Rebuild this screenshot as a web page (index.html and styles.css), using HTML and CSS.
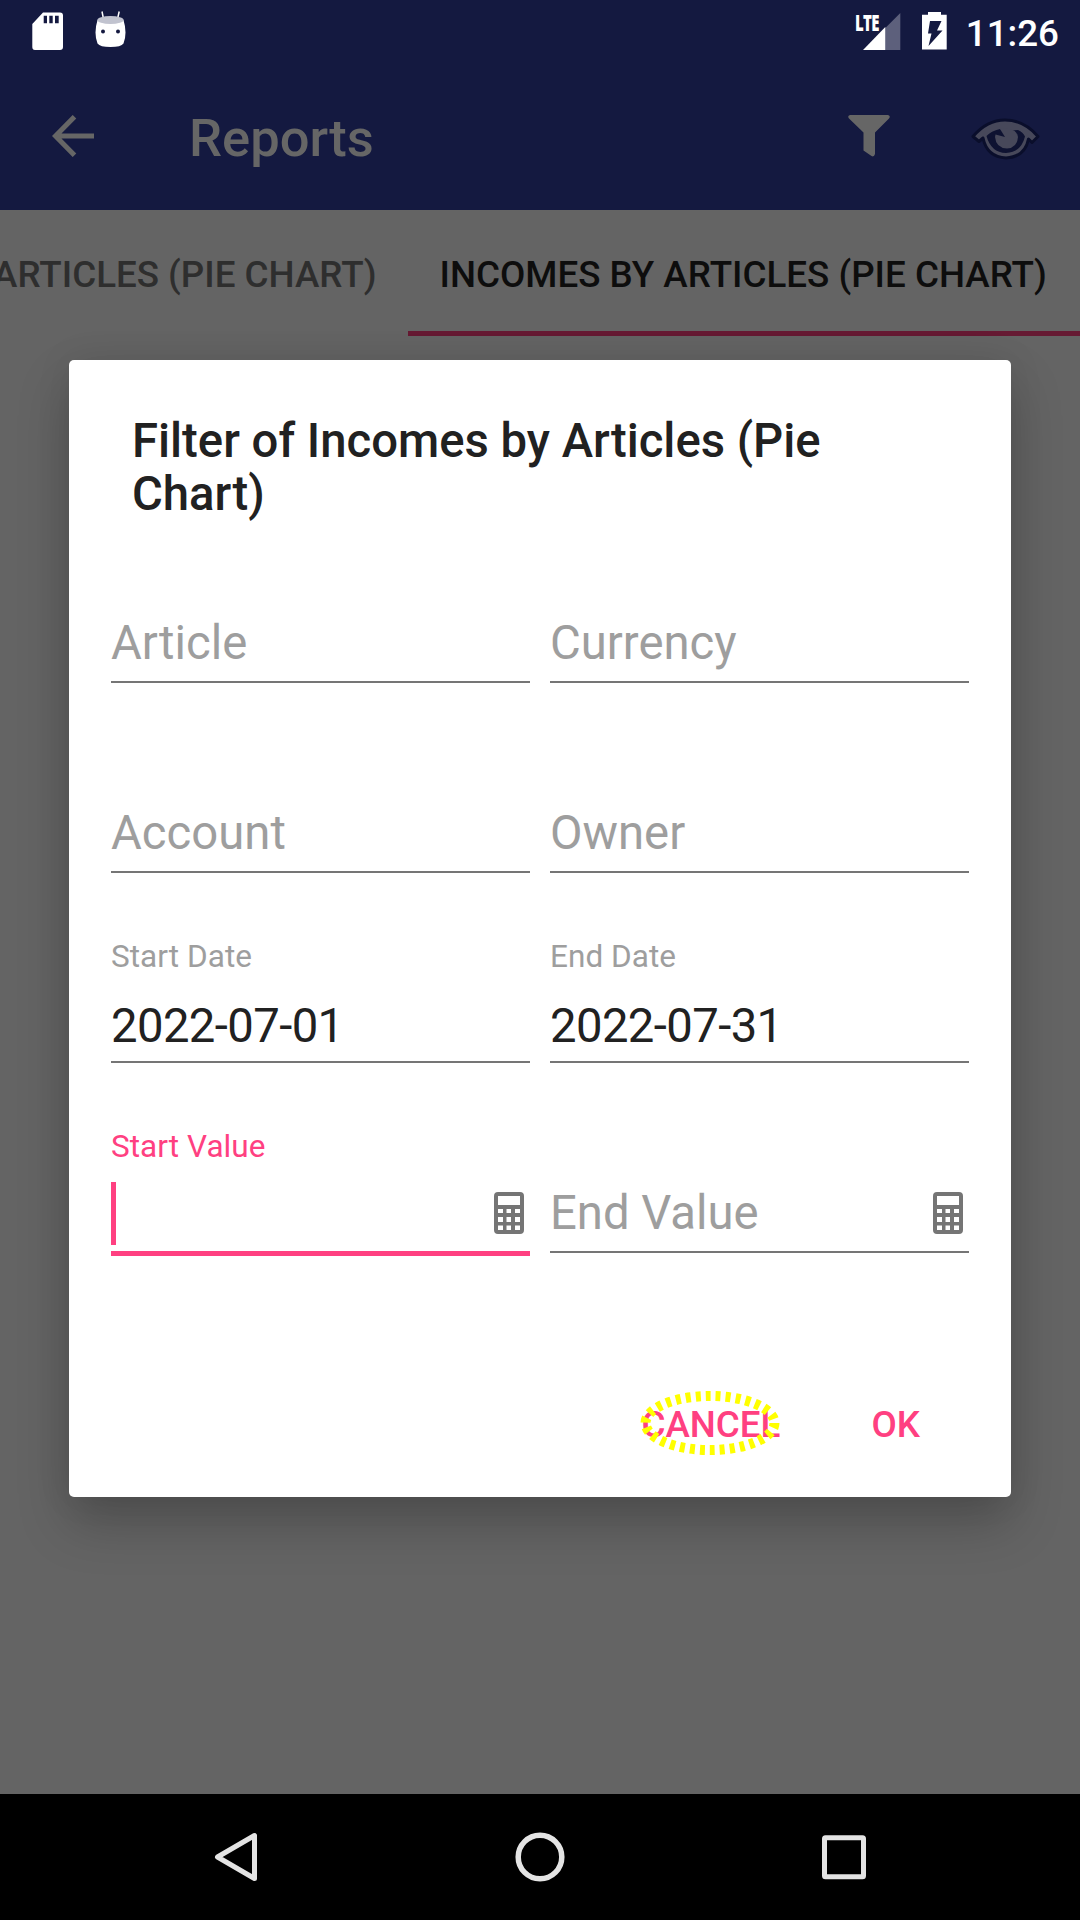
FILE: index.html
```html
<!DOCTYPE html>
<html lang="en">
<head>
<meta charset="utf-8">
<title>Reports</title>
<link rel="stylesheet" href="styles.css">
</head>
<body>
<div class="screen">
  <header class="statusbar">
    <div class="notifications">
      <svg class="ic-sd" width="31" height="39" viewBox="0 0 31 39"><path fill="#fff" fill-rule="evenodd" d="M11 0.5H28Q31 .5 31 3.5V35Q31 38 28 38H3Q.3 38 .3 35V12ZM11.7 3.7V11.3H15V3.7ZM17.3 3.7V11.3H20.7V3.7ZM23 3.7V11.3H26.7V3.7Z"/></svg>
      <svg class="ic-droid" width="32" height="37" viewBox="0 0 32 37"><path fill="none" stroke="#fff" stroke-width="1.500" d="M7 .5L8.500 8M24.200.5L22.500 8"/><path fill="#fff" d="M2.500 9Q16 15 28.500 9Q32.500 22 28.500 32.500Q26 36 15.500 36Q5 36 2.500 32.500Q-1.500 22 2.500 9Z"/><ellipse cx="15.500" cy="9" rx="13.200" ry="4" fill="#c1c3cf"/><circle cx="8" cy="20.500" r="2" fill="#141940"/><circle cx="23" cy="20.500" r="2" fill="#141940"/></svg>
    </div>
    <div class="system">
      <div class="signal"><svg width="47" height="38" viewBox="0 0 47 38"><path fill="#5d607c" d="M46.300 0V37H31.300V15Z"/><path fill="#fff" d="M31.300 14V37H9Z"/></svg><span class="lte">LTE</span></div>
      <svg class="ic-battery" width="25" height="38" viewBox="0 0 25 38"><path fill="#fff" fill-rule="evenodd" d="M6 0H19V2.700H24.700V37.500H0V2.700H6ZM8 9L6 21.500H9.500L6.500 34L20.500 18.500H15L19.500 9Z"/></svg>
      <span class="clock">11:26</span>
    </div>
  </header>
  <div class="appbar">
    <svg class="ic-back" width="42" height="42" viewBox="0 0 42 42"><path fill="none" stroke="#666" stroke-width="5" d="M42 21H4M22.500 1.700L3.500 21L22.500 40.300"/></svg>
    <h1 class="apptitle">Reports</h1>
    <svg class="ic-filter" width="42" height="42" viewBox="0 0 42 42"><path fill="#666" d="M2 0H40Q43 1 41 3.500L27 17.500V39Q26 42.500 23.500 41L15.500 35.500V17.500L1 3.500Q-1 1 2 0Z"/></svg>
    <svg class="ic-eye" width="70" height="46" viewBox="0 0 70 46"><g stroke="#0a0e2b" stroke-width="3" stroke-linejoin="round" fill="#47485a"><path d="M2 19.500Q16 3 34 3Q53 3 67 19.500L61 25.500L57.500 22Q54 40 35 41Q16 40 12 21L8 24.500Z"/></g><path fill="#0e1231" d="M15.500 19Q20 14 29 12L33 14L47 13Q52 15 54 19.500Q50 35.500 35 36Q20 35.500 15.500 19Z"/><path fill="#47485a" d="M24.500 17.500L34 20L29 12Q46 10 47 20Q46 31 36 31.500Q25 31 24 20Z"/></svg>
  </div>
  <nav class="tabs">
    <div class="tab">EXPENSES BY ARTICLES (PIE CHART)</div>
    <div class="tab active">INCOMES BY ARTICLES (PIE CHART)</div>
  </nav>
  <main class="content">
    <section class="dialog">
      <h2 class="dialog-title">Filter of Incomes by Articles (Pie Chart)</h2>
      <div class="form">
        <div class="field"><div class="label"></div><div class="hint">Article</div></div>
        <div class="field"><div class="label"></div><div class="hint">Currency</div></div>
        <div class="field"><div class="label"></div><div class="hint">Account</div></div>
        <div class="field"><div class="label"></div><div class="hint">Owner</div></div>
        <div class="field"><div class="label">Start Date</div><div class="value">2022-07-01</div></div>
        <div class="field"><div class="label">End Date</div><div class="value">2022-07-31</div></div>
        <div class="field focused"><div class="label">Start Value</div><div class="value"><i class="caret"></i><svg class="ic-calc" width="30" height="42" viewBox="0 0 30 42"><path fill="#757575" fill-rule="evenodd" d="M4 0H26Q30 0 30 4V38Q30 42 26 42H4Q0 42 0 38V4Q0 0 4 0ZM4 4V13H26V4ZM4 17V21H9V17ZM12.500 17V21H17V17ZM21 17V21H26V17ZM4 25V30H9V25ZM12.500 25V30H17V25ZM21 25V30H26V25ZM4 33.500V38H9V33.500ZM12.500 33.500V38H17V33.500ZM21 33.500V38H26V33.500Z"/></svg></div></div>
        <div class="field"><div class="label"></div><div class="hint">End Value<svg class="ic-calc" width="30" height="42" viewBox="0 0 30 42"><path fill="#757575" fill-rule="evenodd" d="M4 0H26Q30 0 30 4V38Q30 42 26 42H4Q0 42 0 38V4Q0 0 4 0ZM4 4V13H26V4ZM4 17V21H9V17ZM12.500 17V21H17V17ZM21 17V21H26V17ZM4 25V30H9V25ZM12.500 25V30H17V25ZM21 25V30H26V25ZM4 33.500V38H9V33.500ZM12.500 33.500V38H17V33.500ZM21 33.500V38H26V33.500Z"/></svg></div></div>
      </div>
      <div class="actions">
        <div class="button cancel">CANCEL<svg class="highlight" width="144" height="68" viewBox="0 0 144 68"><ellipse cx="72" cy="34" rx="64.500" ry="27" fill="none" stroke="#ff0" stroke-width="10" stroke-dasharray="5 5"/></svg></div>
        <div class="button">OK</div>
      </div>
    </section>
  </main>
  <footer class="navbar">
    <svg width="50" height="50" viewBox="0 0 50 50"><path fill="none" stroke="#e4e4e4" stroke-width="5" stroke-linejoin="round" d="M43.500 3.500V46.500L6.500 25Z"/></svg>
    <svg width="50" height="50" viewBox="0 0 50 50"><circle cx="25" cy="25" r="21.800" fill="none" stroke="#e4e4e4" stroke-width="5.500"/></svg>
    <svg width="50" height="50" viewBox="0 0 50 50"><rect x="5.500" y="5.700" width="39" height="39" rx="1" fill="none" stroke="#e4e4e4" stroke-width="5"/></svg>
  </footer>
</div>
</body>
</html>
```
FILE: styles.css
```css
* { box-sizing: border-box; }
body { margin: 0; font-family: Roboto, "Noto Sans", sans-serif; }
svg { display: block; flex: none; }
h1, h2 { margin: 0; font-weight: 500; }

.screen { width: 1080px; height: 1920px; display: flex; flex-direction: column; overflow: hidden; background: #646464; }

.statusbar { height: 63px; flex: none; display: flex; justify-content: space-between; align-items: flex-start; background: #141940; color: #fff; padding: 0 21px 0 32px; }
.notifications { display: flex; gap: 32px; }
.ic-sd { margin-top: 12px; }
.ic-droid { margin-top: 11px; }
.system { display: flex; }
.signal { position: relative; margin: 12.500px 21px 0 0; }
.lte { position: absolute; left: 1px; top: -2px; font: 800 22px/22px "Open Sans", sans-serif; letter-spacing: -1px; transform: scaleX(.68); transform-origin: left; }
.ic-battery { margin-top: 12px; margin-right: 19px; }
.clock { font-size: 36.750px; line-height: 43px; font-weight: 500; margin-top: 11.500px; }

.appbar { height: 147px; flex: none; display: flex; align-items: flex-start; background: #141940; padding: 52px 39px 0 52px; }
.apptitle { flex: 1; margin: -8px 0 0 95px; font-size: 52.500px; line-height: 62px; color: #666; }
.ic-back { margin-top: 0; }
.ic-filter { margin: 0 81px 0 0; }
.ic-eye { margin: 2px 0 0; }

.tabs { height: 126px; flex: none; display: flex; justify-content: flex-end; overflow: hidden; }
.tab { flex: none; padding: 42.500px 31.500px 0; font-size: 36.750px; line-height: 43px; font-weight: 500; white-space: nowrap; color: #2e2e2e; }
.tab.active { width: 672px; color: #0d0d0d; border-bottom: 5px solid #661a33; }

.content { flex: 1; padding: 24px 69px 0; }
.dialog { height: 1137px; background: #fff; border-radius: 5px; box-shadow: 0 26px 52px rgba(0,0,0,.22), 0 0 36px rgba(0,0,0,.08); }
.dialog-title { padding: 55px 63px 0; font-size: 47.250px; line-height: 53px; color: #212121; }

.form { display: grid; grid-template-columns: 419px 419px; column-gap: 20px; grid-auto-rows: 190px; padding: 28px 42px 0; }
.field { display: flex; flex-direction: column; height: 134px; padding-top: 9px; border-bottom: 2.500px solid #757575; }
.label { height: 37px; font-size: 31.500px; line-height: 37px; color: #9e9e9e; letter-spacing: .05px; }
.hint, .value { flex: 1; display: flex; align-items: center; justify-content: space-between; font-size: 47.250px; line-height: 56px; color: #9e9e9e; padding: 10px 6px 0 0; }
.value { color: #212121; padding-top: 16px; letter-spacing: -.6px; }
.focused { height: 137px; border-bottom: 5px solid #ff4081; }
.focused .label { color: #ff4081; }
.focused .value { padding-top: 10px; }
.caret { width: 5px; height: 63px; background: #ff4081; }

.actions { display: flex; justify-content: flex-end; gap: 91px; padding: 94px 91px 0 0; }
.button { position: relative; font-size: 36.750px; line-height: 43px; font-weight: 500; color: #ff4081; }
.highlight { position: absolute; left: -3px; top: -14px; }

.navbar { height: 126px; flex: none; display: flex; justify-content: space-between; align-items: center; padding: 0 211px; background: #000; }
```
